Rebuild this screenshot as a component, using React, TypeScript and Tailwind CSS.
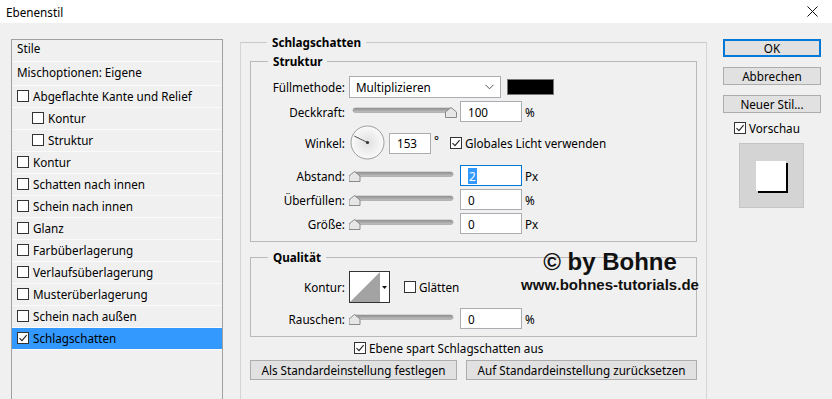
import React from "react"

const styleList: { label: string; indent?: boolean; check?: boolean; checked?: boolean; selected?: boolean }[] = [
  { label: "Stile" },
  { label: "Mischoptionen: Eigene" },
  { label: "Abgeflachte Kante und Relief", check: true },
  { label: "Kontur", check: true, indent: true },
  { label: "Struktur", check: true, indent: true },
  { label: "Kontur", check: true },
  { label: "Schatten nach innen", check: true },
  { label: "Schein nach innen", check: true },
  { label: "Glanz", check: true },
  { label: "Farbüberlagerung", check: true },
  { label: "Verlaufsüberlagerung", check: true },
  { label: "Musterüberlagerung", check: true },
  { label: "Schein nach außen", check: true },
  { label: "Schlagschatten", check: true, checked: true, selected: true },
]

function Checkbox({ checked = false }: { checked?: boolean }) {
  return (
    <span className="flex h-[12px] w-[12px] shrink-0 items-center justify-center border border-[#333] bg-white">
      {checked && (
        <svg width="10" height="10" viewBox="0 0 10 10">
          <path d="M1.5 5.2 L4 7.6 L8.6 2.2" fill="none" stroke="#222" strokeWidth="1.1" />
        </svg>
      )}
    </span>
  )
}

// track + house-shaped thumb
function Slider({ value }: { value: number }) {
  const cx = 5.5 + (96.5 * value) / 100
  return (
    <svg width="108" height="16" viewBox="0 0 108 16" className="shrink-0">
      <defs>
        <linearGradient id="trk" x1="0" y1="0" x2="0" y2="1">
          <stop offset="0" stopColor="#8c8c8c" />
          <stop offset="1" stopColor="#c4c4c4" />
        </linearGradient>
      </defs>
      <rect x="4" y="4" width="100" height="4.5" rx="2.2" fill="url(#trk)" stroke="#9a9a9a" strokeWidth="0.6" />
      <path
        d={`M${cx} 3.5 L${cx + 5.5} 8 L${cx + 5.5} 13.5 L${cx - 5.5} 13.5 L${cx - 5.5} 8 Z`}
        fill="#e6e6e6"
        stroke="#8a8a8a"
        strokeWidth="1"
        strokeLinejoin="round"
      />
    </svg>
  )
}

function NumField({ value, width = "w-[62px]", focused = false }: { value: string; width?: string; focused?: boolean }) {
  return (
    <div
      className={`flex h-[21px] ${width} shrink-0 items-center bg-white pl-[7px] ${
        focused ? "border border-[#0078d7]" : "border border-[#abadb3]"
      }`}
    >
      {focused ? <span className="bg-[#3399ff] px-[1px] text-white">{value}</span> : <span>{value}</span>}
    </div>
  )
}

function Label({ children }: { children: React.ReactNode }) {
  return <div className="w-[94px] shrink-0 text-right">{children}</div>
}

function SliderRow({ label, value, field, unit, focused, className }: { label: string; value: number; field: string; unit: string; focused?: boolean; className: string }) {
  return (
    <div className={`flex h-[21px] items-center ${className}`}>
      <Label>{label}</Label>
      <div className="ml-[4px]">
        <Slider value={value} />
      </div>
      <div className="ml-[3px]">
        <NumField value={field} focused={focused} />
      </div>
      <span className="ml-[3px]">{unit}</span>
    </div>
  )
}

function Button({ children, primary = false, className = "" }: { children: React.ReactNode; primary?: boolean; className?: string }) {
  return (
    <div
      className={`flex items-center justify-center bg-[#e1e1e1] ${
        primary ? "border-2 border-[#0078d7]" : "border border-[#adadad]"
      } ${className}`}
    >
      {children}
    </div>
  )
}

export default function App() {
  return (
    <div className="relative h-[399px] w-[832px] overflow-hidden bg-[#f0f0f0] font-['Noto_Sans',sans-serif] text-[11.7px] leading-[16px] text-black">
      {/* title bar */}
      <div className="flex h-[23px] items-center justify-between bg-white pl-[6px] pr-[14px]">
        <span>Ebenenstil</span>
        <svg width="11" height="11" viewBox="0 0 11 11">
          <path d="M0.5 0.5 L10.5 10.5 M10.5 0.5 L0.5 10.5" stroke="#111" strokeWidth="1" />
        </svg>
      </div>

      <div className="flex">
        {/* left: style list */}
        <div className="ml-[11px] mt-[16px] h-[380px] w-[212px] shrink-0 border border-[#a0a0a0]">
          {styleList.map((s, i) => (
            <div
              key={i}
              className={`flex items-center border-b border-[#fbfbfb] ${s.indent ? "pl-[20px]" : "pl-[5px]"} ${
                s.selected ? "bg-[#3399ff]" : ""
              } ${i === 0 ? "h-[22px] pb-[6px]" : i === 1 ? "h-[24px] pb-[4px]" : "h-[22px] pb-[2px]"}`}
            >
              {s.check && <Checkbox checked={s.checked} />}
              <span className={s.check ? "ml-[4px]" : ""}>{s.label}</span>
            </div>
          ))}
        </div>

        {/* middle: Schlagschatten */}
        <fieldset className="ml-[17px] mt-[11px] w-[467px] shrink-0 border border-[#d5d5d5] border-t-[#c8c8c8] px-[9px] pb-[40px]">
          <legend className="ml-[17px] px-[5px] font-bold">Schlagschatten</legend>

          <fieldset className="mt-[3px] border border-[#b9b9b9] pb-[7px]">
            <legend className="ml-[17px] px-[5px] font-bold">Struktur</legend>

            <div className="mt-[7px] flex h-[22px] items-center">
              <Label>Füllmethode:</Label>
              <div className="ml-[4px] flex h-[22px] w-[152px] items-center justify-between border border-[#abadb3] bg-white pl-[6px] pr-[6px]">
                <span>Multiplizieren</span>
                <svg width="9" height="6" viewBox="0 0 9 6">
                  <path d="M0.5 0.8 L4.5 4.8 L8.5 0.8" fill="none" stroke="#555" strokeWidth="1" />
                </svg>
              </div>
              <div className="ml-[6px] h-[16px] w-[47px] border border-[#777] bg-black" />
            </div>

            <SliderRow className="mt-[3px]" label="Deckkraft:" value={100} field="100" unit="%" />

            <div className="mt-[4px] flex h-[34px] items-center">
              <Label>Winkel:</Label>
              <svg width="36" height="36" viewBox="0 0 36 36" className="ml-[4px] shrink-0">
                <defs>
                  <radialGradient id="dial" cx="0.5" cy="0.5" r="0.5">
                    <stop offset="0" stopColor="#e0e0e0" />
                    <stop offset="1" stopColor="#fafafa" />
                  </radialGradient>
                </defs>
                <circle cx="18.5" cy="17.5" r="16.5" fill="url(#dial)" stroke="#9c9c9c" strokeWidth="1" />
                <path d="M18.5 17.5 L5.2 11" stroke="#555" strokeWidth="1" />
                <circle cx="18.5" cy="17.5" r="1.6" fill="#333" />
              </svg>
              <div className="ml-[4px]">
                <NumField value="153" width="w-[42px]" />
              </div>
              <span className="ml-[3px] -mt-[6px]">°</span>
              <div className="ml-[11px] flex items-center">
                <Checkbox checked />
                <span className="ml-[3px]">Globales Licht verwenden</span>
              </div>
            </div>

            <SliderRow className="mt-[5px]" label="Abstand:" value={0} field="2" unit="Px" focused />
            <SliderRow className="mt-[3px]" label="Überfüllen:" value={0} field="0" unit="%" />
            <SliderRow className="mt-[3px]" label="Größe:" value={0} field="0" unit="Px" />
          </fieldset>

          <fieldset className="mt-[7px] border border-[#b9b9b9] pb-[7px]">
            <legend className="ml-[17px] px-[5px] font-bold">Qualität</legend>

            <div className="mt-[6px] flex h-[32px] items-center">
              <Label>Kontur:</Label>
              <div className="ml-[4px] flex h-[32px] w-[41px] shrink-0 border border-[#333] bg-white">
                <svg width="30" height="30" viewBox="0 0 30 30">
                  <polygon points="0,30 30,0 30,30" fill="#a3a3a3" />
                </svg>
                <div className="flex flex-1 items-center justify-center">
                  <svg width="5" height="3" viewBox="0 0 5 3">
                    <polygon points="0,0 5,0 2.5,3" fill="#111" />
                  </svg>
                </div>
              </div>
              <div className="ml-[14px] flex items-center">
                <Checkbox />
                <span className="ml-[3px]">Glätten</span>
              </div>
            </div>

            <SliderRow className="mt-[5px]" label="Rauschen:" value={0} field="0" unit="%" />
          </fieldset>

          <div className="mt-[2px] flex h-[18px] items-center pl-[104px]">
            <Checkbox checked />
            <span className="ml-[3px]">Ebene spart Schlagschatten aus</span>
          </div>

          <div className="mt-[3px] flex gap-[9px]">
            <Button className="h-[20px] w-[207px]">Als Standardeinstellung festlegen</Button>
            <Button className="h-[20px] w-[231px]">Auf Standardeinstellung zurücksetzen</Button>
          </div>
        </fieldset>

        {/* right column */}
        <div className="ml-[16px] mt-[16px] flex w-[98px] shrink-0 flex-col">
          <Button primary className="h-[18px]">OK</Button>
          <Button className="mt-[10px] h-[18px]">Abbrechen</Button>
          <Button className="mt-[10px] h-[18px]">Neuer Stil...</Button>
          <div className="mt-[8px] flex h-[14px] items-center pl-[11px]">
            <Checkbox checked />
            <span className="ml-[3px]">Vorschau</span>
          </div>
          <div className="ml-[16px] mt-[8px] h-[65px] w-[65px] border border-[#c4c4c4] bg-[#d4d4d4] pl-[16px] pt-[17px]">
            <div className="h-[30px] w-[30px] bg-white shadow-[2px_2px_0_#000]" />
          </div>
        </div>
      </div>

      {/* watermark */}
      <div className="absolute left-[512px] top-[250px] flex w-[196px] flex-col items-center whitespace-nowrap font-['Liberation_Sans',Arial,sans-serif] font-bold text-[#111]">
        <span className="text-[24px] leading-[24px]">© by Bohne</span>
        <span className="mt-[3px] text-[15px] leading-[16px]">www.bohnes-tutorials.de</span>
      </div>
    </div>
  )
}
